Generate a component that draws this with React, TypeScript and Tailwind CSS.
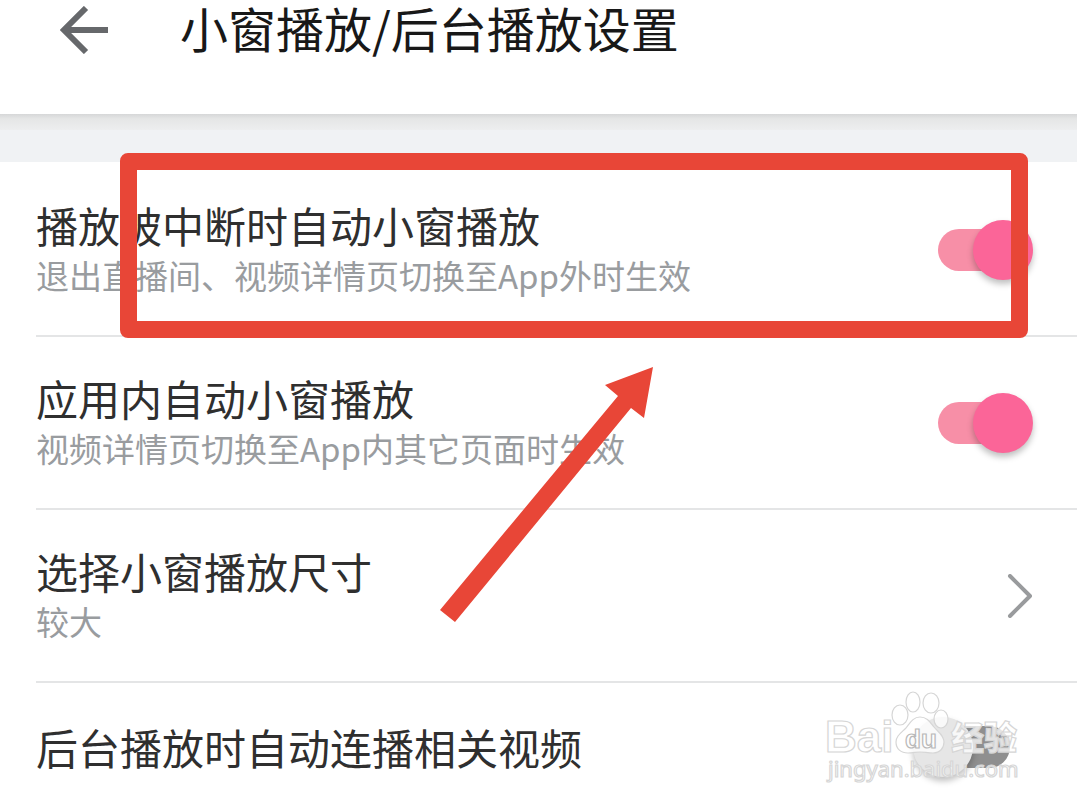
import React from "react"

interface SettingTextProps {
  title: string
  description?: string
}

function SettingText({ title, description }: SettingTextProps) {
  return (
    <span className="block min-w-0 flex-1">
      <span className="block text-[42px] leading-[50px] text-[#2f2f2f]">{title}</span>
      {description && (
        <span className="block text-[33px] leading-[50px] text-[#999c9f]">{description}</span>
      )}
    </span>
  )
}

interface SwitchRowProps extends SettingTextProps {
  defaultChecked?: boolean
  className?: string
}

function SwitchRow({ title, description, defaultChecked, className = "" }: SwitchRowProps) {
  return (
    <label className={`flex items-center pr-[44px] ${className}`}>
      <SettingText title={title} description={description} />
      <input
        type="checkbox"
        role="switch"
        defaultChecked={defaultChecked}
        className="grid h-[60px] w-[120px] shrink-0 appearance-none items-center before:col-start-1 before:row-start-1 before:ml-[25px] before:h-[42px] before:w-[72px] before:rounded-full before:bg-[#8f8f8f] before:content-[''] after:col-start-1 after:row-start-1 after:size-[60px] after:justify-self-start after:rounded-full after:bg-[#e6e6e6] after:shadow-[0_4px_6px_rgba(0,0,0,0.25)] after:content-[''] checked:before:bg-[#f78fa7] checked:after:justify-self-end checked:after:bg-[#fb6598]"
      />
    </label>
  )
}

function Watermark() {
  return (
    <svg
      className="pointer-events-none absolute top-[686px] right-[52px]"
      width="204"
      height="100"
      viewBox="0 0 204 100"
      fill="#ffffff"
      fillOpacity="0.75"
      stroke="#d6d6d6"
      strokeWidth="1.2"
      aria-hidden="true"
    >
      <text x="4" y="66" fontFamily="Liberation Sans, sans-serif" fontSize="44" fontWeight="700">
        Bai
      </text>
      <ellipse cx="79" cy="29" rx="8" ry="10" />
      <ellipse cx="92" cy="16" rx="7" ry="10" />
      <ellipse cx="110" cy="17" rx="8" ry="10" />
      <ellipse cx="120" cy="33" rx="7" ry="9" />
      <path d="M99 31C92 31 89 37 85 42C80 47 75 50 75 56C75 63 80 67 87 67C92 67 95 66 99 66C103 66 107 67 112 67C119 67 123 62 123 56C123 49 117 46 113 41C109 36 106 31 99 31Z" />
      <text x="84" y="62" fontFamily="Liberation Sans, sans-serif" fontSize="26" fontWeight="700" stroke="#b8b8b8">
        du
      </text>
      <text x="130" y="64" fontFamily="Noto Sans CJK SC, sans-serif" fontSize="33" fontWeight="900">
        经验
      </text>
      <text x="7" y="91" fontFamily="Noto Sans, sans-serif" fontSize="22">
        jingyan.baidu.com
      </text>
    </svg>
  )
}

export default function App() {
  return (
    <div className="relative bg-[#f0f2f4] font-['Noto_Sans_CJK_SC',sans-serif]">
      <header className="flex h-[114px] items-start bg-white pl-[60px]">
        <button type="button" aria-label="返回" className="flex h-[60px] w-[48px] items-center">
          <svg width="48" height="48" viewBox="0 0 48 48" fill="none" stroke="#66686b" strokeWidth="6">
            <path d="M48 24H6" />
            <path d="M26 2L4 24L26 46" />
          </svg>
        </button>
        <h1 className="pl-[72px] text-[48px] leading-[54px] text-[#181818]">
          小窗播放/后台播放设置
        </h1>
      </header>
      <div className="h-12">
        <div className="h-4 bg-linear-to-b from-[#d6d7d8] via-[#e5e6e6] via-30% to-[#edeeef]" />
      </div>

      <main className="bg-white pt-0.5">
        <div className="ml-9 divide-y-2 divide-[#e4e5e6]">
          <SwitchRow
            title="播放被中断时自动小窗播放"
            description="退出直播间、视频详情页切换至App外时生效"
            defaultChecked
            className="pt-9 pb-[35px]"
          />
          <SwitchRow
            title="应用内自动小窗播放"
            description="视频详情页切换至App内其它页面时生效"
            defaultChecked
            className="pt-9 pb-[35px]"
          />
          <button type="button" className="flex w-full items-center pt-9 pr-[44px] pb-[35px] text-left">
            <SettingText title="选择小窗播放尺寸" description="较大" />
            <svg
              width="26"
              height="44"
              viewBox="0 0 26 44"
              fill="none"
              stroke="#999b9d"
              strokeWidth="4"
              strokeLinecap="round"
              strokeLinejoin="round"
            >
              <path d="M3 2L23 22L3 42" />
            </svg>
          </button>
          <SwitchRow title="后台播放时自动连播相关视频" className="pt-[34px] pb-[30px]" />
        </div>
      </main>

      {/* Выделение и стрелка поверх настроек */}
      <div className="pointer-events-none absolute top-[153px] right-[49px] left-[120px] h-[185px] rounded-lg border-[17px] border-[#e84637]" />
      <svg
        className="pointer-events-none absolute top-[367px] left-[440px]"
        width="214"
        height="256"
        viewBox="0 0 214 256"
        fill="#e84637"
        aria-hidden="true"
      >
        <path d="M213 0L165 18L178 29L0 243L15 255L191 41L204 51Z" />
      </svg>
      <Watermark />
    </div>
  )
}
